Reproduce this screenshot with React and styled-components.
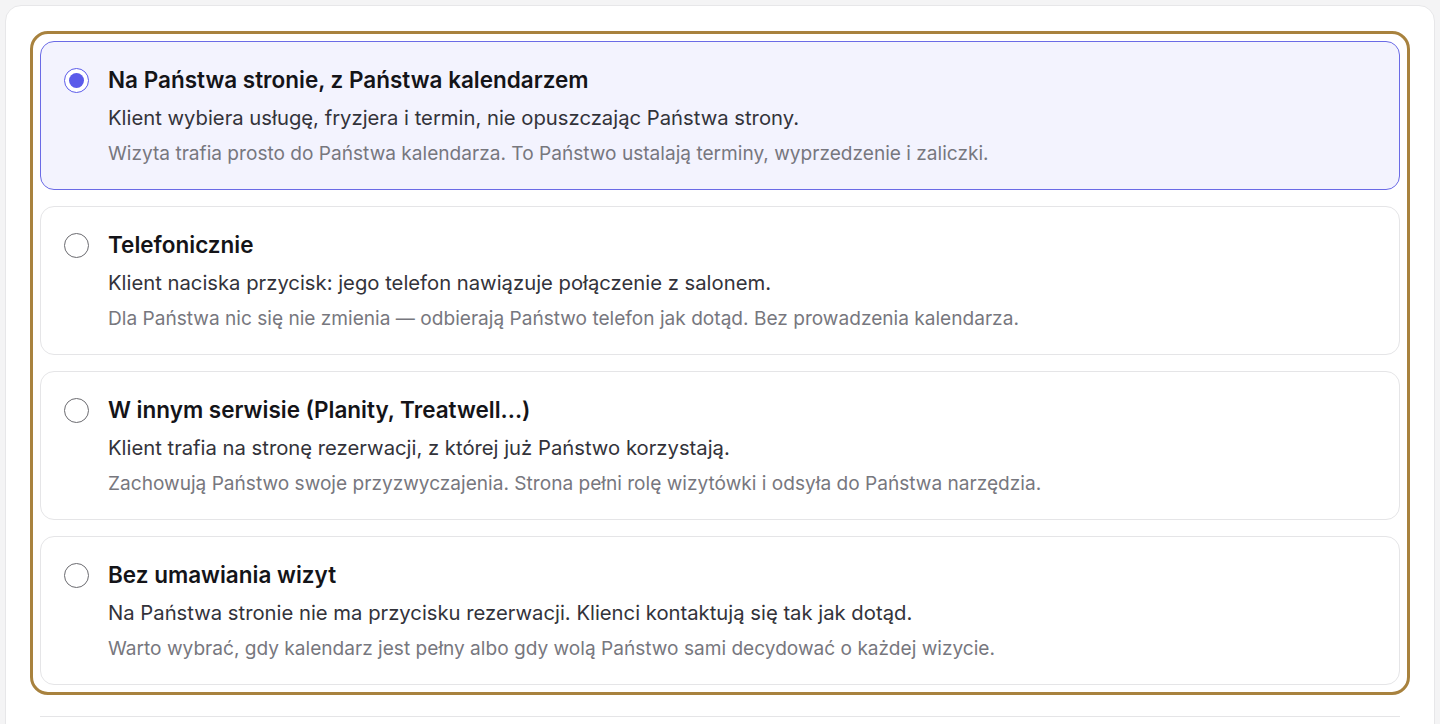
import React, { useState } from 'react';
import styled, { createGlobalStyle } from 'styled-components';

const GlobalStyle = createGlobalStyle`
  * { box-sizing: border-box; }
  body {
    margin: 0;
    background: #f4f4f5;
    font-family: Inter, "Noto Sans", sans-serif;
    -webkit-font-smoothing: antialiased;
  }
`;

const Page = styled.div`
  padding: 5px 5px 0;
  height: 724px;
  overflow: hidden;
`;

const Card = styled.section`
  background: #fff;
  border: 1px solid #e7e7e9;
  border-radius: 16px;
  padding: 25px 24px 0;
  height: 740px;
`;

const Highlight = styled.div`
  border: 3px solid #a8823e;
  border-radius: 18px;
  padding: 7px;
  display: flex;
  flex-direction: column;
  gap: 16px;
`;

const Option = styled.label`
  display: flex;
  align-items: flex-start;
  gap: 19px;
  padding: 23px 23px 22px;
  border-radius: 14px;
  border: 1px solid ${(p) => (p.$active ? '#6a6ae6' : '#e5e5e7')};
  background: ${(p) => (p.$active ? '#f3f3fe' : '#fff')};
  cursor: pointer;
  min-height: 149px;
`;

const Radio = styled.span`
  flex: none;
  width: 25px;
  height: 25px;
  margin-top: 3px;
  border-radius: 50%;
  border: 1.5px solid ${(p) => (p.$active ? '#5b5bea' : '#6b6b70')};
  background: #fff;
  display: flex;
  align-items: center;
  justify-content: center;

  &::after {
    content: '';
    width: 15px;
    height: 15px;
    border-radius: 50%;
    background: #5b5bea;
    display: ${(p) => (p.$active ? 'block' : 'none')};
  }
`;

const Text = styled.div`
  display: flex;
  flex-direction: column;
`;

const Title = styled.div`
  font-size: 22.5px;
  font-weight: 600;
  color: #141418;
  line-height: 30px;
`;

const Desc = styled.div`
  font-size: 20.25px;
  color: #33333a;
  line-height: 28px;
  margin-top: 9px;
`;

const Note = styled.div`
  font-size: 19.1px;
  color: #77777e;
  line-height: 26px;
  margin-top: 8px;
`;

const Divider = styled.hr`
  border: 0;
  border-top: 1px solid #e5e5e7;
  margin: 21px 10px 0;
`;

const options = [
  {
    title: 'Na Państwa stronie, z Państwa kalendarzem',
    desc: 'Klient wybiera usługę, fryzjera i termin, nie opuszczając Państwa strony.',
    note: 'Wizyta trafia prosto do Państwa kalendarza. To Państwo ustalają terminy, wyprzedzenie i zaliczki.',
  },
  {
    title: 'Telefonicznie',
    desc: 'Klient naciska przycisk: jego telefon nawiązuje połączenie z salonem.',
    note: 'Dla Państwa nic się nie zmienia — odbierają Państwo telefon jak dotąd. Bez prowadzenia kalendarza.',
  },
  {
    title: 'W innym serwisie (Planity, Treatwell...)',
    desc: 'Klient trafia na stronę rezerwacji, z której już Państwo korzystają.',
    note: 'Zachowują Państwo swoje przyzwyczajenia. Strona pełni rolę wizytówki i odsyła do Państwa narzędzia.',
  },
  {
    title: 'Bez umawiania wizyt',
    desc: 'Na Państwa stronie nie ma przycisku rezerwacji. Klienci kontaktują się tak jak dotąd.',
    note: 'Warto wybrać, gdy kalendarz jest pełny albo gdy wolą Państwo sami decydować o każdej wizycie.',
  },
];

export default function App() {
  const [selected, setSelected] = useState(0);

  return (
    <>
      <GlobalStyle />
      <Page>
        <Card>
          <Highlight>
            {options.map((o, i) => (
              <Option key={i} $active={selected === i} onClick={() => setSelected(i)}>
                <Radio $active={selected === i} />
                <Text>
                  <Title>{o.title}</Title>
                  <Desc>{o.desc}</Desc>
                  <Note>{o.note}</Note>
                </Text>
              </Option>
            ))}
          </Highlight>
          <Divider />
        </Card>
      </Page>
    </>
  );
}
